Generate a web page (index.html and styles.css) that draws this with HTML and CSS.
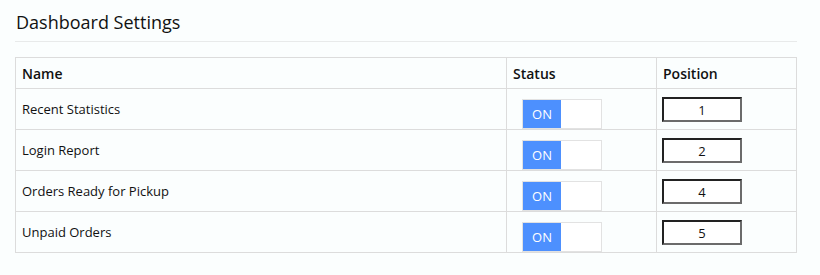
FILE: index.html
```html
<!DOCTYPE html>
<html lang="en">
<head>
  <meta charset="UTF-8" />
  <title>Dashboard Settings</title>
  <link rel="stylesheet" href="styles.css">
</head>
<body>
  <div class="page">
    <h1 class="title">Dashboard Settings</h1>

    <table class="settings">
      <thead>
        <tr>
          <th class="col-name">Name</th>
          <th class="col-status">Status</th>
          <th class="col-pos">Position</th>
        </tr>
      </thead>
      <tbody>
        <tr>
          <td>Recent Statistics</td>
          <td class="cell-top"><div class="toggle"><span class="toggle-on">ON</span></div></td>
          <td class="cell-top"><input class="pos-input" type="text" value="1"></td>
        </tr>
        <tr>
          <td>Login Report</td>
          <td class="cell-top"><div class="toggle"><span class="toggle-on">ON</span></div></td>
          <td class="cell-top"><input class="pos-input" type="text" value="2"></td>
        </tr>
        <tr>
          <td>Orders Ready for Pickup</td>
          <td class="cell-top"><div class="toggle"><span class="toggle-on">ON</span></div></td>
          <td class="cell-top"><input class="pos-input" type="text" value="4"></td>
        </tr>
        <tr>
          <td>Unpaid Orders</td>
          <td class="cell-top"><div class="toggle"><span class="toggle-on">ON</span></div></td>
          <td class="cell-top"><input class="pos-input" type="text" value="5"></td>
        </tr>
      </tbody>
    </table>
  </div>
</body>
</html>
```

FILE: styles.css
```css
* {
  margin: 0;
  padding: 0;
  box-sizing: border-box;
}
body {
  background: #fbfefe;
  color: #111;
  font-family: 'Open Sans', sans-serif;
  font-size: 13px;
}
.page {
  width: 782px;
  margin-left: 15px;
  padding-top: 9px;
}
.title {
  font-size: 18px;
  font-weight: 400;
  line-height: 26px;
  padding: 0 0 6px 1px;
  border-bottom: 1px solid #e8eaea;
  margin-bottom: 15px;
}
.settings {
  width: 100%;
  border-collapse: collapse;
}
.settings th,
.settings td {
  border: 1px solid #dcdcdc;
  text-align: left;
  padding: 0 6px;
  vertical-align: middle;
}
.settings th {
  height: 31px;
  font-size: 14px;
  font-weight: 600;
}
.settings td {
  height: 41px;
}
.settings td.cell-top {
  vertical-align: top;
  padding: 0 5px;
}
.col-name { width: 491px; }
.col-status { width: 150px; }

.toggle {
  display: flex;
  width: 80px;
  height: 30px;
  margin: 10px 0 0 10px;
  border: 1px solid #e2e2e2;
  background: #fff;
}
.toggle-on {
  width: 38px;
  background: #4d90fe;
  color: #fff;
  display: flex;
  align-items: center;
  justify-content: center;
  font-size: 13px;
}
.pos-input {
  display: block;
  width: 80px;
  height: 25px;
  margin-top: 8px;
  border: 2px solid;
  border-color: #222 #6b6b6b #6b6b6b #222;
  background: #fff;
  text-align: center;
  font-family: 'Open Sans', sans-serif;
  font-size: 13px;
  color: #111;
}
```
